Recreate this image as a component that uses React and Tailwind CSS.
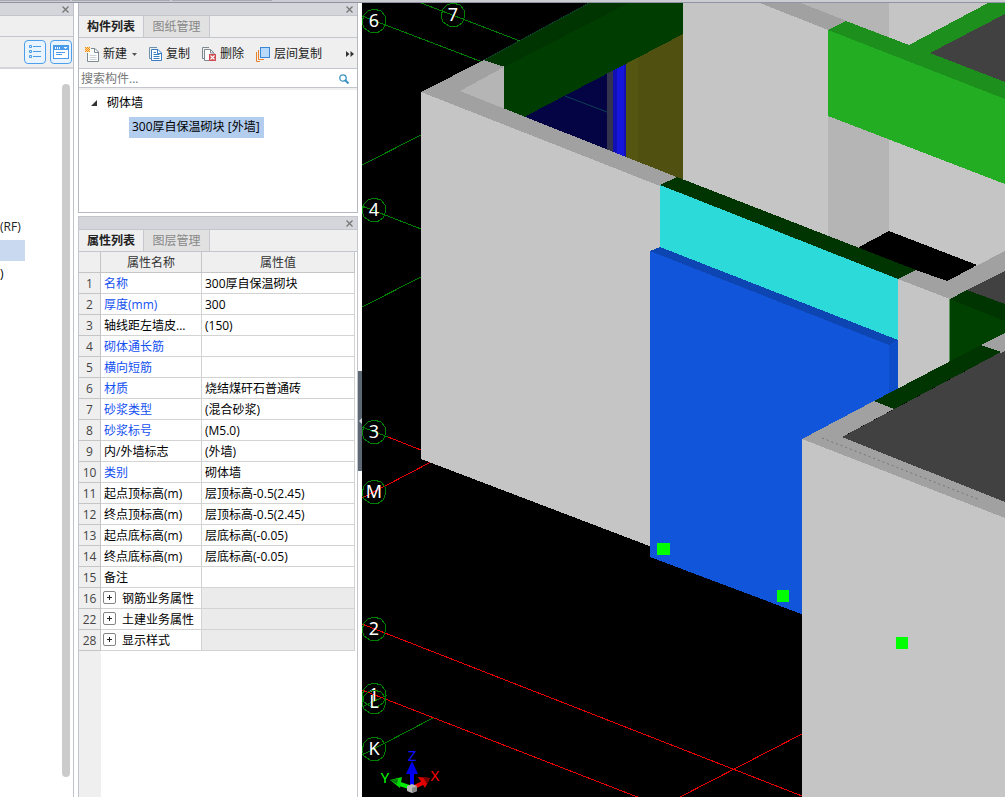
import React, { useState } from "react";

const rows = [
  { id: 1, name: "名称", value: "300厚自保温砌块", blue: true },
  { id: 2, name: "厚度(mm)", value: "300", blue: true },
  { id: 3, name: "轴线距左墙皮...", value: "(150)" },
  { id: 4, name: "砌体通长筋", value: "", blue: true },
  { id: 5, name: "横向短筋", value: "", blue: true },
  { id: 6, name: "材质", value: "烧结煤矸石普通砖", blue: true },
  { id: 7, name: "砂浆类型", value: "(混合砂浆)", blue: true },
  { id: 8, name: "砂浆标号", value: "(M5.0)", blue: true },
  { id: 9, name: "内/外墙标志", value: "(外墙)" },
  { id: 10, name: "类别", value: "砌体墙", blue: true },
  { id: 11, name: "起点顶标高(m)", value: "层顶标高-0.5(2.45)" },
  { id: 12, name: "终点顶标高(m)", value: "层顶标高-0.5(2.45)" },
  { id: 13, name: "起点底标高(m)", value: "层底标高(-0.05)" },
  { id: 14, name: "终点底标高(m)", value: "层底标高(-0.05)" },
  { id: 15, name: "备注", value: "" },
  { id: 16, name: "钢筋业务属性", group: true },
  { id: 22, name: "土建业务属性", group: true },
  { id: 28, name: "显示样式", group: true },
];

function CloseIcon() {
  return (
    <svg width="7" height="7" viewBox="0 0 7 7" fill="none" stroke="#777" strokeWidth="1.3">
      <path d="M.5 .5 6.5 6.5M6.5 .5 .5 6.5" />
    </svg>
  );
}

function TitleBar({ label }) {
  return (
    <div className="flex h-3 shrink-0 items-center justify-end bg-[#d4d6dc] pr-[2px]">
      <button type="button" aria-label={label} className="flex h-3 w-3 items-center justify-center">
        <CloseIcon />
      </button>
    </div>
  );
}

function Tabs({ items }) {
  const [active, setActive] = useState(0);
  return (
    <div role="tablist" className="flex h-[23px] shrink-0 border-y border-[#c3c6cf] bg-[#efefef]">
      {items.map((t, i) => (
        <button
          key={t}
          type="button"
          role="tab"
          aria-selected={active === i}
          onClick={() => setActive(i)}
          className={
            active === i
              ? "w-[65px] border-r border-[#c6c8ce] bg-[#efefef] font-bold text-[#222]"
              : "w-[66px] border-r border-[#c6c8ce] bg-[#e1e1e1] text-[#888]"
          }
        >
          {t}
        </button>
      ))}
    </div>
  );
}

function NewIcon() {
  return (
    <svg width="14" height="15" viewBox="0 0 14 15" fill="none">
      <path d="M6 1.5h4l3.5 3.5v9.500h-11V6" fill="#fff" stroke="#7d8a92" />
      <path d="M9.500 1.500V5.500h4" stroke="#7d8a92" />
      <path d="M4.500 8.500h7M4.500 10.500h7M4.500 12.500h7" stroke="#ccd2d6" />
      <path d="M0 .5h1M2 .5h1M4 .5h1M1 1.500h1M3 1.500h1M0 2.500h1M2 2.500h1M4 2.500h1M1 3.500h1M3 3.500h1M0 4.500h1M2 4.500h1M4 4.500h1" stroke="#f08a10" />
      <path d="M1 .5h1M3 .5h1M0 1.500h1M2 1.500h1M4 1.500h1M1 2.500h1M3 2.500h1M0 3.500h1M2 3.500h1M4 3.500h1M1 4.500h1M3 4.500h1" stroke="#ffd894" />
    </svg>
  );
}

function CopyIcon() {
  return (
    <svg width="13" height="14" viewBox="0 0 13 14" fill="none">
      <path d="M8 .5H.5v11H2" stroke="#7190a9" />
      <path d="M2.500 2.500h6.500l3.500 3.500v7.500h-10z" fill="#fff" stroke="#3b7dc0" />
      <path d="M8.500 2.500v4h4M4.500 5.500h2.500M4.500 7.500h6M4.500 9.500h6M4.500 11.500h6" stroke="#3b7dc0" />
    </svg>
  );
}

function DeleteIcon() {
  return (
    <svg width="14" height="14" viewBox="0 0 14 14" fill="none">
      <path d="M7 .5H.5v11H2" stroke="#7d8a92" />
      <path d="M7 13.500H2.500v-11h6l3.500 3.500v1" fill="#fff" stroke="#7d8a92" />
      <path d="M8.500 2.500v3.500h3" stroke="#7d8a92" />
      <rect x="7" y="7" width="7" height="7" fill="#cf4b52" />
      <path d="m8.500 8.500 4 4m0-4-4 4" stroke="#fff" strokeWidth="1.200" />
    </svg>
  );
}

function LayerIcon() {
  return (
    <svg width="14" height="15" viewBox="0 0 14 15" fill="none">
      <path d="M.5 5v9.500H4M2.500 3v9.500H8" stroke="#e8812c" />
      <rect x="4.500" y=".5" width="9" height="10" fill="#b9d9fb" stroke="#3c86d8" />
    </svg>
  );
}

function LeftPane() {
  return (
    <aside className="flex w-[74px] shrink-0 flex-col border-r border-[#bfc2c9] bg-white">
      <TitleBar label="关闭左侧面板" />
      <div className="h-[22px] shrink-0 border-y border-[#c3c6cf] bg-[#efefef]" />
      <div className="flex h-8 shrink-0 items-center justify-end gap-1 border-b-2 border-[#d5d6da] bg-[#efefef] pr-px">
        <button type="button" aria-label="列表视图" className="flex size-[22px] h-6 items-center justify-center rounded border border-[#4d9fee] bg-[#eaf4ff]">
          <svg width="14" height="14" viewBox="0 0 14 14" fill="none" stroke="#4a9cea">
            <path d="M1.500 .5h2v2h-2zM1.500 5.500h2v2h-2zM1.500 10.500h2v2h-2zM5 1.500h8M5 6.500h8M5 11.500h8" />
          </svg>
        </button>
        <button type="button" aria-label="窗口视图" className="flex size-[22px] h-6 items-center justify-center rounded border border-[#4d9fee] bg-[#eaf4ff]">
          <svg width="16" height="14" viewBox="0 0 16 14" fill="none">
            <rect x=".5" y=".5" width="15" height="13" fill="#fff" stroke="#4a9cea" />
            <path d="M1 1h14v4H1z" fill="#4a9cea" />
            <path d="M2 3h6" stroke="#fff" strokeWidth="2" strokeDasharray="1 1" />
            <path d="M10.500 2h4l-2 2z" fill="#fff" />
            <path d="M3 7.500h9M3 9.500h6" stroke="#4a9cea" />
          </svg>
        </button>
      </div>
      <div className="flex flex-1 justify-between pr-[3px]">
        <ul className="w-[25px] overflow-hidden pt-[146px] leading-6">
          <li className="h-[25px]">(RF)</li>
          <li className="h-[21px] bg-[#c9d9f0]" />
          <li className="h-7 pt-px text-black">)</li>
        </ul>
        <div className="mt-[15px] mb-5 w-2 rounded-full bg-[#cbcbcb]" />
      </div>
    </aside>
  );
}

function ComponentPanel() {
  const tool = "flex items-center gap-1 whitespace-nowrap";
  return (
    <section className="flex h-[210px] shrink-0 flex-col border border-t-0 border-[#b5b8bf] bg-white">
      <TitleBar label="关闭构件列表" />
      <Tabs items={["构件列表", "图纸管理"]} />
      <div className="flex h-[30px] shrink-0 items-center bg-[#efefef] pt-[2px] pr-[3px] pl-[6px] text-[#222]">
        <button type="button" className={tool}>
          <NewIcon />
          新建
          <svg width="5" height="3" viewBox="0 0 5 3" className="ml-px"><path d="M0 0h5L2.500 3z" fill="#555" /></svg>
        </button>
        <button type="button" className={tool + " ml-3"}><CopyIcon />复制</button>
        <button type="button" className={tool + " ml-3"}><DeleteIcon />删除</button>
        <button type="button" className={tool + " ml-3"}><LayerIcon />层间复制</button>
        <button type="button" aria-label="更多" className="ml-auto">
          <svg width="8" height="6" viewBox="0 0 8 6"><path d="M0 0l3.500 3L0 6zM4.500 0L8 3 4.500 6z" fill="#333" /></svg>
        </button>
      </div>
      <label className="flex h-5 shrink-0 items-center border-y border-[#c3c6cf] bg-white pt-px pr-2 pl-[2px]">
        <input aria-label="搜索构件" placeholder="搜索构件..." className="min-w-0 flex-1 bg-transparent outline-none placeholder:text-[#777]" />
        <svg width="10" height="10" viewBox="0 0 10 10" fill="none" stroke="#3993c2">
          <circle cx="4" cy="4" r="3.200" strokeWidth="1.300" />
          <path d="M6.500 6.500 9.500 9.500" strokeWidth="2" />
        </svg>
      </label>
      <ul className="border-t-2 border-[#f0f0f0] pt-px text-black">
        <li>
          <button type="button" className="flex h-6 items-center pl-3">
            <svg width="6" height="6" viewBox="0 0 6 6"><path d="M6 0v6H0z" fill="#333" /></svg>
            <span className="pl-[10px]">砌体墙</span>
          </button>
          <ul className="pl-[50px]">
            <li className="flex h-6 items-center">
              <button type="button" className="h-[21px] bg-[#b3cdef] px-1 pl-[3px] whitespace-nowrap">300厚自保温砌块 [外墙]</button>
            </li>
          </ul>
        </li>
      </ul>
    </section>
  );
}

function PropertyPanel() {
  return (
    <section className="mt-[3px] flex flex-1 flex-col border-x border-t border-[#c3c6cf] bg-white">
      <TitleBar label="关闭属性列表" />
      <Tabs items={["属性列表", "图层管理"]} />
      <div className="flex flex-1 flex-col pr-[2px]">
        <table className="w-full table-fixed border-separate border-spacing-0 leading-[18px]">
          <colgroup>
            <col className="w-[22px]" />
            <col className="w-[101px]" />
            <col />
          </colgroup>
          <thead>
            <tr className="h-[21px] bg-[#efefef] text-[#333]">
              <th className="border-r border-b border-[#c5c5c5] p-0" aria-label="序号" />
              <th className="border-r border-b border-[#c5c5c5] p-0 pt-[2px] font-normal">属性名称</th>
              <th className="border-r border-b border-[#c5c5c5] p-0 pt-[2px] font-normal">属性值</th>
            </tr>
          </thead>
          <tbody>
            {rows.map((r) => (
              <tr key={r.id} className="h-[21px]">
                <td className="border-r border-b border-[#c5c5c5] bg-[#efefef] p-0 pt-[2px] text-center text-[#444]">{r.id}</td>
                <td className={"border-r border-b border-[#d3d3d3] p-0 pt-[2px] whitespace-nowrap " + (r.group ? "pl-[2px] " : "pl-[3px] ") + (r.blue ? "text-[#1450f0]" : "text-black")}>
                  {r.group ? (
                    <span className="flex h-[18px] items-start gap-[6px]">
                      <button type="button" aria-label={"展开" + r.name} className="pt-px">
                        <svg className="block" width="13" height="13" viewBox="0 0 13 13" fill="none">
                          <rect x=".5" y=".5" width="12" height="12" rx="1.500" fill="#fff" stroke="#858585" />
                          <path d="M4 6.500h5M6.500 4v5" stroke="#222" />
                        </svg>
                      </button>
                      {r.name}
                    </span>
                  ) : r.name}
                </td>
                <td className={"border-r border-b border-[#d3d3d3] p-0 pt-[2px] pl-[3px] whitespace-nowrap text-black " + (r.group ? "bg-[#ebebeb]" : "")}>{r.value}</td>
              </tr>
            ))}
          </tbody>
        </table>
        <div className="w-[22px] flex-1 bg-[#efefef]" />
      </div>
    </section>
  );
}

const faces = [
  ["#c5c5c5", "682,3 1005,3 1005,275 950,302 682,200"],
  ["#b5b5b5", "790,3 889,3 889,231 889,265 828,240 828,30"],
  ["#c5c5c5", "760,3 828,30 828,60 760,60"],
  ["#a1a1a1", "760,3 801,3 847,21 847,30 828,30"],
  ["#1d8f1d", "828,30 846,21 909,45 988,3 1005,3 1005,101 828,32"],
  ["#23ad23", "828,30 1005,99 1005,184 828,116"],
  ["#414141", "930,53 1005,14 1005,82"],
  ["#040444", "520,116 607,70 607,153 520,119"],
  ["#33334d", "607,70 613,66 613,155 607,153"],
  ["#1010b5", "613,66 626,60 626,160 613,155"],
  ["#1515dc", "617,66 624,60 624,159 617,156"],
  ["#555512", "626,60 638,54 638,165 626,160"],
  ["#505010", "638,54 683,30 683,183 638,165"],
  ["#003400", "484,60 589,3 631,3 504,69"],
  ["#003d00", "504,67 629,3 683,3 683,34 526,116 526,119 504,111"],
  ["#b5b5b5", "460,91 504,66 504,111"],
  ["#c5c5c5", "421,92 660,183 662,247 652,251 652,547 421,459"],
  ["#a1a1a1", "421,92 484,60 504,67 460,91 679,178 660,186"],
  ["#000", "859,247 889,231 977,265 947,283 914,272 859,250"],
  ["#003400", "660,185 677,177 916,270 898,279"],
  ["#2cdada", "660,185 898,279 898,341 660,248"],
  ["#1155db", "650,251 889,345 889,396 804,439 804,615 650,557"],
  ["#0d46b3", "650,251 660,247 898,340 889,345"],
  ["#0e4dc9", "889,345 898,340 898,390 889,395"],
  ["#a1a1a1", "898,279 916,270 947,281 1005,251 1005,273 950,300"],
  ["#c5c5c5", "898,279 950,299 950,364 898,391"],
  ["#414141", "967,290 1005,271 1005,306"],
  ["#003400", "950,299 967,290 1005,304 1005,323"],
  ["#004000", "950,299 1005,321 1005,335 950,364"],
  ["#414141", "842,437 1001,352 1005,350 1005,502"],
  ["#a1a1a1", "981,345 1005,333 1005,351 1001,353 981,348"],
  ["#003400", "874,401 981,345 1001,352 894,409"],
  ["#a1a1a1", "802,439 874,401 894,409 842,437 1005,502 1005,519"],
  ["#c5c5c5", "802,439 1005,518 1005,797 802,797"],
];

const bubbles = [
  ["6", 374, 21], ["7", 453, 15], ["4", 374, 210], ["3", 374, 432], ["M", 374, 492],
  ["2", 374, 629], ["1", 374, 695], ["L", 374, 702], ["K", 374, 749],
];

function Viewport() {
  return (
    <main className="min-w-0 flex-1 bg-black">
      <svg className="block h-full w-full" viewBox="362 3 643 794" preserveAspectRatio="xMinYMin slice" role="img" aria-label="三维视图">
        <g fill="none" stroke="#008000" shapeRendering="crispEdges">
          <path d="M362 16 485 63M421 3 520 41M362 165 421 135M362 206 421 229M362 307 421 277M362 427 388 437M362 707 387 695M362 755 433 718" />
          <path d="M388 437 421 450M362 498 431 462M362 624 802 796M362 690 640 798M680 797 802 734" stroke="#e80000" />
        </g>
        <g shapeRendering="crispEdges">
          {faces.map(([fill, points], i) => <polygon key={i} fill={fill} points={points} />)}
        </g>
        <path d="M565 96 607 112" stroke="#0c3f55" />
        <path d="M484 60 589 3" stroke="#1f7070" strokeDasharray="1 1.500" />
        <path d="M822 438 980 500" stroke="#777" strokeDasharray="2 3" />
        <path d="M949.500 299V361" stroke="#5b945b" />
        <g fill="#00ff00">
          <rect x="657" y="543" width="13" height="12" />
          <rect x="777" y="590" width="12" height="12" />
          <rect x="896" y="637" width="12" height="12" />
        </g>
        <g className="font-['Noto_Sans',sans-serif] text-[18px]" textAnchor="middle" fill="#fff">
          {bubbles.map(([t, x, y]) => (
            <g key={t}>
              <polygon
                points="0,-12 7,-10 11,-5 12,1 9,8 3,12 -4,11 -10,7 -12,1 -10,-6 -6,-10"
                transform={"translate(" + x + " " + y + ")"}
                fill="none"
                stroke="#008000"
                shapeRendering="crispEdges"
              />
              <text x={x} y={y + 6}>{t}</text>
            </g>
          ))}
        </g>
        <g>
          <path d="M412 788 397 783" stroke="#00ee00" strokeWidth="4" />
          <path d="M390 780 402 777 400 788z" fill="#00dc00" />
          <path d="M390 780 398 779 397 784z" fill="#087a08" />
          <path d="M412 788 425 782" stroke="#ee0000" strokeWidth="4" />
          <path d="M430 778 418 777 425 788z" fill="#e00000" />
          <path d="M430 778 423 777 427 784z" fill="#770000" />
          <path d="M412 788V772" stroke="#0000ff" strokeWidth="4" />
          <path d="M412 761 418 774 406 774z" fill="#0000e8" />
          <path d="M407 786 412 784 417 786V791L412 793 407 791z" fill="#b9b9b9" />
          <path d="M412 788 417 786V791L412 793z" fill="#888" />
          <g className="font-['Noto_Sans',sans-serif] text-[15px]" textAnchor="middle">
            <text x="412" y="761" fill="#1010ff">Z</text>
            <text x="385" y="783" fill="#00ff00">Y</text>
            <text x="435" y="781" fill="#ff0000">X</text>
          </g>
        </g>
      </svg>
    </main>
  );
}

export default function App() {
  return (
    <div className="flex h-screen min-h-[680px] flex-col overflow-hidden bg-white font-['Open_Sans','Noto_Sans_CJK_SC',sans-serif] text-[12px] leading-4 text-[#222]">
      <div className="flex h-[3px] shrink-0 gap-[2px] border-b border-[#8f94a3] bg-[#cbcdd3]">
        <div className="h-px w-[70px] bg-[#a9abb0]" />
        <div className="h-px w-[98px] bg-[#a9abb0]" />
        <div className="h-px w-[100px] bg-[#a9abb0]" />
      </div>
      <div className="flex min-h-0 flex-1">
        <LeftPane />
        <div className="ml-1 flex w-[280px] shrink-0 flex-col">
          <ComponentPanel />
          <PropertyPanel />
        </div>
        <div className="flex w-1 shrink-0 items-center">
          <button type="button" aria-label="收起面板" className="mt-[42px] flex h-[100px] w-1 items-center justify-center bg-[#5c6874]">
            <svg width="3" height="6" viewBox="0 0 3 6"><path d="M3 0v6L0 3z" fill="#d0d4d8" /></svg>
          </button>
        </div>
        <Viewport />
      </div>
    </div>
  );
}
